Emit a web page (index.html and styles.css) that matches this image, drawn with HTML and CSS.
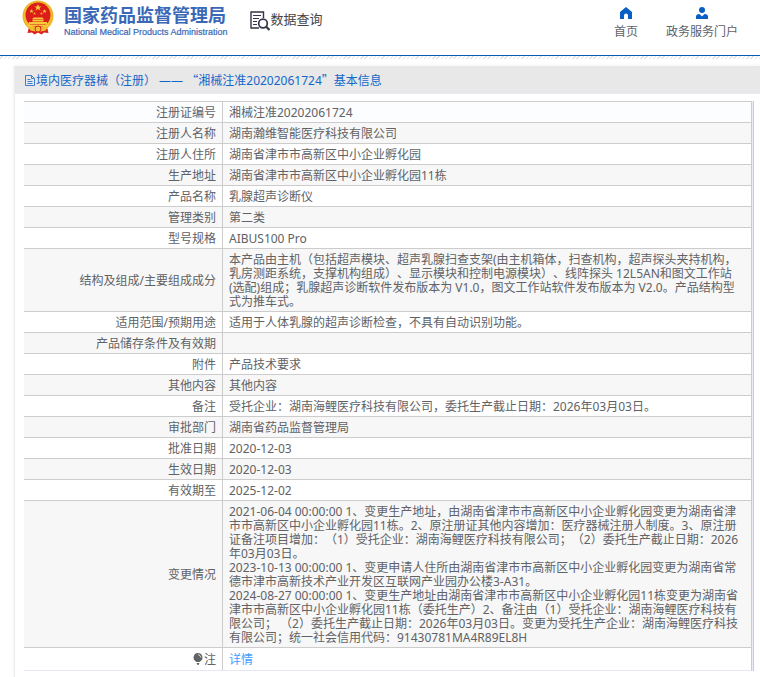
FILE: index.html
```html
<!DOCTYPE html>
<html lang="zh-CN">
<head>
<meta charset="utf-8">
<title>数据查询</title>
<link rel="stylesheet" href="styles.css">
</head>
<body>
<header class="header">
  <a class="brand" href="#">
    <svg class="emblem" viewBox="0 0 64 70" aria-hidden="true">
      <path d="M14 54 L11 66 L20 65 L25 69 L32 65 L39 69 L44 65 L53 66 L50 54Z" fill="#d9221c"/>
      <circle cx="32" cy="32" r="31" fill="#f0bd32"/>
      <circle cx="32" cy="32" r="29" fill="none" stroke="#e3a826" stroke-width="2" stroke-dasharray="3 3"/>
      <circle cx="32" cy="30" r="25" fill="#dc1c18"/>
      <path d="M32 8l2 5h5l-4 3 2 5-5-3-5 3 2-5-4-3h5zM19 18l1 3h3l-2 2 1 3-3-2-3 2 1-3-2-2h3zM45 18l1 3h3l-2 2 1 3-3-2-3 2 1-3-2-2h3zM25 24l1 2h2l-2 1 1 3-2-2-2 2 1-3-2-1h2zM39 24l1 2h2l-2 1 1 3-2-2-2 2 1-3-2-1h2z" fill="#f6c83a"/>
      <path d="M23 35h18l3 4H20zM21 40h22v3H21zM14 44h36v5H14zM11 50h42v3H11z" fill="#f6c83a"/>
      <path d="M15 56Q32 61 49 56L47 61Q32 65 17 61Z" fill="#f0bd32"/>
      <circle cx="32" cy="58" r="6" fill="#f0bd32" stroke="#d9221c" stroke-width="2"/>
    </svg>
    <span class="brand-text">
      <span class="brand-cn">国家药品监督管理局</span>
      <span class="brand-en">National Medical Products Administration</span>
    </span>
  </a>
  <a class="query" href="#">
    <svg class="query-icon" viewBox="0 0 20 20" fill="none" stroke="#34344a" aria-hidden="true">
      <path d="M13.500 7V1H1v16h8" stroke-width="1.400"/>
      <path d="M3 4.500h8M3 7.500h6M3 10.500h4M3 13.500h4" stroke-width="1.200"/>
      <circle cx="13" cy="12.500" r="4.300" stroke-width="1.700"/>
      <path d="M16 15.500l3.500 3.500" stroke-width="2.200"/>
    </svg>
    <span>数据查询</span>
  </a>
  <nav class="nav">
    <a href="#">
      <svg viewBox="0 0 12 12" fill="#0a5fc4" aria-hidden="true"><path d="M6 0L0 5v7h4V8.500a2 2 0 0 1 4 0V12h4V5z"/></svg>
      <span>首页</span>
    </a>
    <a href="#">
      <svg viewBox="0 0 12 12" fill="#0a5fc4" aria-hidden="true"><circle cx="6" cy="3" r="3"/><path d="M0 12V9.500Q0 7 3.500 7L6 9.500 8.500 7Q12 7 12 9.500V12z"/></svg>
      <span>政务服务门户</span>
    </a>
  </nav>
</header>
<main class="panel">
  <h1 class="panel-title">
    <svg class="doc-icon" viewBox="0 0 10 12" fill="none" stroke="#3c7fd2" aria-hidden="true"><path d="M.5.5h6l3 3v7h-9zM6.500.5v3h3M2.500 4.500h3M2.500 6.500h5M2.500 8.500h5"/></svg>
    <span>境内医疗器械（注册） —— <span class="cjk">“</span>湘械注准20202061724<span class="cjk">”</span>基本信息</span>
  </h1>
  <div class="table-frame">
    <table class="info">
      <tbody>
        <tr><th scope="row">注册证编号</th><td>湘械注准20202061724</td></tr>
        <tr><th scope="row">注册人名称</th><td>湖南瀚维智能医疗科技有限公司</td></tr>
        <tr><th scope="row">注册人住所</th><td>湖南省津市市高新区中小企业孵化园</td></tr>
        <tr><th scope="row">生产地址</th><td>湖南省津市市高新区中小企业孵化园11栋</td></tr>
        <tr><th scope="row">产品名称</th><td>乳腺超声诊断仪</td></tr>
        <tr><th scope="row">管理类别</th><td>第二类</td></tr>
        <tr><th scope="row">型号规格</th><td>AIBUS100 Pro</td></tr>
        <tr><th scope="row">结构及组成/主要组成成分</th><td>本产品由主机（包括超声模块、超声乳腺扫查支架(由主机箱体，扫查机构，超声探头夹持机构，乳房测距系统，支撑机构组成）、显示模块和控制电源模块）、线阵探头 12L5AN和图文工作站(选配)组成；乳腺超声诊断软件发布版本为 V1.0，图文工作站软件发布版本为 V2.0。产品结构型式为推车式。</td></tr>
        <tr><th scope="row">适用范围/预期用途</th><td>适用于人体乳腺的超声诊断检查，不具有自动识别功能。</td></tr>
        <tr><th scope="row">产品储存条件及有效期</th><td></td></tr>
        <tr><th scope="row">附件</th><td>产品技术要求</td></tr>
        <tr><th scope="row">其他内容</th><td>其他内容</td></tr>
        <tr><th scope="row">备注</th><td>受托企业：湖南海鲤医疗科技有限公司，委托生产截止日期：2026年03月03日。</td></tr>
        <tr><th scope="row">审批部门</th><td>湖南省药品监督管理局</td></tr>
        <tr><th scope="row">批准日期</th><td>2020-12-03</td></tr>
        <tr><th scope="row">生效日期</th><td>2020-12-03</td></tr>
        <tr><th scope="row">有效期至</th><td>2025-12-02</td></tr>
        <tr><th scope="row">变更情况</th><td>2021-06-04 00:00:00 1、变更生产地址，由湖南省津市市高新区中小企业孵化园变更为湖南省津市市高新区中小企业孵化园11栋。2、原注册证其他内容增加：医疗器械注册人制度。3、原注册证备注项目增加：（1）受托企业：湖南海鲤医疗科技有限公司；（2）委托生产截止日期：2026年03月03日。<br>2023-10-13 00:00:00 1、变更申请人住所由湖南省津市市高新区中小企业孵化园变更为湖南省常德市津市高新技术产业开发区互联网产业园办公楼3-A31。<br>2024-08-27 00:00:00 1、变更生产地址由湖南省津市市高新区中小企业孵化园11栋变更为湖南省津市市高新区中小企业孵化园11栋（委托生产）2、备注由（1）受托企业：湖南海鲤医疗科技有限公司； （2）委托生产截止日期：2026年03月03日。变更为受托生产企业：湖南海鲤医疗科技有限公司；统一社会信用代码：91430781MA4R89EL8H</td></tr>
        <tr class="note"><th scope="row"><svg class="bulb" viewBox="0 0 10 12" aria-hidden="true"><path d="M5 0a4.500 4.500 0 0 1 2.500 8.200L6.500 9h-3l-1-.8A4.500 4.500 0 0 1 5 0zM3.500 10h3l-1 2h-1z" fill="#606266"/><path d="M5 1.500Q7.500 2 7.800 4.500" fill="none" stroke="#fff" stroke-width=".8"/></svg>注</th><td><a href="#">详情</a></td></tr>
      </tbody>
    </table>
  </div>
</main>
</body>
</html>
```

FILE: styles.css
```css
* {
  box-sizing: border-box;
}

body {
  margin: 0;
  min-height: 100vh;
  display: flex;
  flex-direction: column;
  background: #fff;
  color: #606266;
  font-family: "Noto Sans", "Noto Sans CJK SC", sans-serif;
  font-size: 12px;
  line-height: 14px;
  text-spacing-trim: space-all;
}

a {
  color: inherit;
  text-decoration: none;
}

svg {
  display: block;
}

.header {
  display: flex;
  align-items: flex-start;
  height: 59px;
  padding: 0 22px;
  background:
    linear-gradient(#fff, #fff) top / 100% 55px no-repeat,
    linear-gradient(#0a5cb8, #0a5cb8) 0 55px / 100% 1px no-repeat,
    repeating-linear-gradient(135deg, #fff 0 2px, #e2e2e2 2px 3px);
}

.brand {
  display: flex;
  gap: 10px;
}

.emblem {
  width: 32px;
  height: 35px;
}

.brand-text {
  display: flex;
  flex-direction: column;
  padding-top: 4px;
  color: #3a68b6;
  white-space: nowrap;
}

.brand-cn {
  font-family: "Noto Sans CJK SC", sans-serif;
  font-size: 18px;
  font-weight: 700;
  line-height: 20px;
}

.brand-en {
  font-family: "Liberation Sans", sans-serif;
  font-size: 9px;
  line-height: 16px;
  -webkit-text-stroke: 0.2px;
}

.query {
  display: flex;
  gap: 1px;
  margin: 11px 0 0 22px;
  color: #444;
  font-size: 13px;
  line-height: 16px;
}

.query-icon {
  width: 20px;
  height: 20px;
}

.nav {
  display: flex;
  gap: 28px;
  margin: 7px 0 0 auto;
}

.nav a {
  display: flex;
  flex-direction: column;
  align-items: center;
  gap: 6px;
}

.nav svg {
  width: 12px;
  height: 12px;
}

.panel {
  flex: 1;
  margin: 7px 0 0 14px;
  border-left: 1px solid #ececf0;
  box-shadow: 0 0 4px #eee;
}

.panel-title {
  display: flex;
  align-items: center;
  gap: 1px;
  height: 28px;
  margin: 0 0 7px;
  padding: 2px 0 0 10px;
  border-bottom: 1px solid #ebebf5;
  background: #e8e8e8;
  color: #1467c8;
  font-size: 12px;
  font-weight: 400;
}

.doc-icon {
  width: 10px;
  height: 12px;
}

.cjk {
  font-family: "Noto Sans CJK SC", sans-serif;
}

.table-frame {
  margin: 0 6px 6px 9px;
  padding-right: 1px;
  border-right: 1px solid #ccc;
  background: #ebebf5;
}

.info {
  width: 100%;
  border-collapse: separate;
  border-spacing: 0;
  border-right: 1px solid #ccc;
  border-bottom: 1px solid #e6e9f5;
  background: #fff;
}

.info th,
.info td {
  height: 21px;
  padding: 4px 6px 2px;
  border-top: 1px solid #ccc;
  font-weight: 400;
  text-align: left;
  vertical-align: middle;
}

.info th {
  width: 199px;
  border-right: 1px solid #ccc;
  text-align: right;
}

.info tr:first-child {
  background: #fbfdff;
}

.info tr:nth-child(even) {
  background: #f7f7f7;
}

.info .note th,
.info .note td {
  height: 23px;
}

.note a {
  color: #409eff;
}

.bulb {
  display: inline-block;
  width: 10px;
  height: 12px;
  margin-right: 1px;
  vertical-align: -1px;
}
```
